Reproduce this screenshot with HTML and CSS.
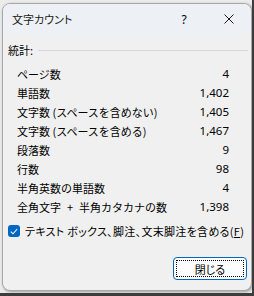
FILE: index.html
```html
<!DOCTYPE html>
<html lang="ja">
<head>
  <meta charset="UTF-8">
  <title>文字カウント</title>
  <link rel="stylesheet" href="styles.css">
</head>
<body>

<div class="window">
  <div class="titlebar">
    <span class="title">文字カウント</span>
    <span class="help">?</span>
    <span class="close">
      <svg width="10" height="10" viewBox="0 0 10 10"><path d="M0.5 0.5 L9.5 9.5 M9.5 0.5 L0.5 9.5" stroke="#1a1a1a" stroke-width="1" fill="none"/></svg>
    </span>
  </div>

  <div class="content">
    <div class="group-head">
      <span>統計:</span>
      <span class="rule"></span>
    </div>

    <div class="stats">
      <div class="row"><span>ページ数</span><span class="num">4</span></div>
      <div class="row"><span>単語数</span><span class="num">1,402</span></div>
      <div class="row"><span>文字数 (スペースを含めない)</span><span class="num">1,405</span></div>
      <div class="row"><span>文字数 (スペースを含める)</span><span class="num">1,467</span></div>
      <div class="row"><span>段落数</span><span class="num">9</span></div>
      <div class="row"><span>行数</span><span class="num">98</span></div>
      <div class="row"><span>半角英数の単語数</span><span class="num">4</span></div>
      <div class="row"><span>全角文字<span class="plus">+</span>半角カタカナの数</span><span class="num">1,398</span></div>
    </div>

    <label class="check">
      <span class="box">
        <svg width="8" height="7" viewBox="0 0 8 7"><path d="M0.8 3.6 L3 5.8 L7.2 1" stroke="#fff" stroke-width="1.1" fill="none"/></svg>
      </span>
      <span class="check-text">テキスト ボックス、脚注、文末脚注を含める(<u>F</u>)</span>
    </label>

    <div class="actions">
      <button class="btn"><span class="focus">閉じる</span></button>
    </div>
  </div>
</div>

</body>
</html>
```

FILE: styles.css
```css
html, body {
  margin: 0;
  padding: 0;
}

body {
  width: 254px;
  height: 296px;
  box-sizing: border-box;
  background-color: #ececec;
  border-right: 2px solid #3c3c3c;
  border-bottom: 3px solid #3c3c3c;
  padding: 3px 0 0 2px;
  font-family: "Noto Sans CJK JP", "Noto Sans", sans-serif;
  font-size: 11px;
  color: #000;
}

.window {
  width: 250px;
  height: 288px;
  box-sizing: border-box;
  background-color: #f0f0f0;
  border: 1px solid #a8a8a8;
  border-radius: 8px;
  box-shadow: 1px 1px 3px rgba(0, 0, 0, 0.35);
  overflow: hidden;
}

.titlebar {
  height: 30px;
  background-color: #edf1f6;
  display: flex;
  align-items: center;
  padding-left: 9px;
}

.title {
  flex: 1;
  font-size: 11px;
  font-feature-settings: "palt";
  color: #1a1a1a;
}

.help {
  width: 12px;
  text-align: center;
  font-family: "Noto Sans", sans-serif;
  font-size: 12px;
  margin-right: 34px;
}

.close {
  display: flex;
  margin-right: 17px;
}

.content {
  padding: 0 3px 0 5px;
}

.group-head {
  margin-top: 8px;
  height: 16px;
  display: flex;
  align-items: center;
}

.group-head .rule {
  flex: 1;
  height: 1px;
  background-color: #d6d6d6;
  margin-left: 5px;
}

.stats {
  padding: 6px 19px 0 9px;
}

.row {
  height: 19px;
  display: flex;
  align-items: center;
  justify-content: space-between;
}

.plus {
  margin: 0 6px;
}

.num {
  font-family: "Noto Sans", sans-serif;
  font-size: 11.5px;
}

.check {
  margin-top: 7px;
  height: 16px;
  display: flex;
  align-items: center;
  gap: 5px;
}

.check-text {
  font-feature-settings: "palt";
  letter-spacing: 0.3px;
}

.check .box {
  width: 12px;
  height: 12px;
  border-radius: 3px;
  background-color: #0067c0;
  display: flex;
  align-items: center;
  justify-content: center;
}

.check u {
  text-underline-offset: 1px;
}

.actions {
  display: flex;
  justify-content: flex-end;
  margin-top: 18px;
  padding-right: 1px;
}

.btn {
  width: 74px;
  height: 23px;
  padding: 2px;
  box-sizing: border-box;
  background-color: #fdfdfd;
  border: 1px solid #0067c0;
  border-radius: 4px;
  font-family: inherit;
  font-feature-settings: "palt";
  font-size: 11px;
  color: #000;
  display: flex;
}

.btn .focus {
  flex: 1;
  border: 1px dotted #000;
  display: flex;
  align-items: center;
  justify-content: center;
}
```
